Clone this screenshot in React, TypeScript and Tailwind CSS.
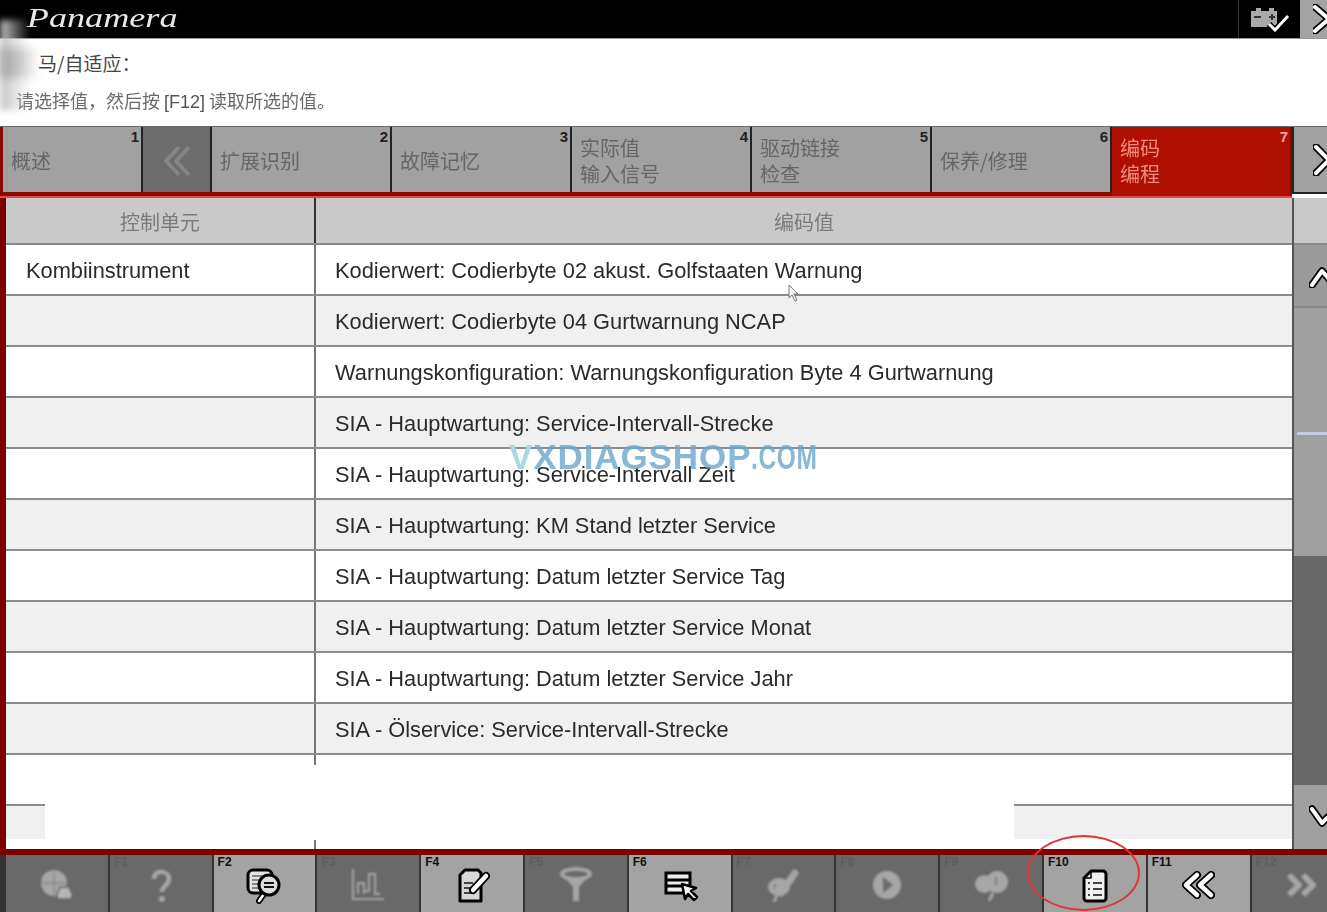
import type { ReactNode } from 'react';

const SANS = "font-['Liberation_Sans','Noto_Sans_CJK_SC',sans-serif]";
const CJK = "font-['Noto_Sans_CJK_SC','Liberation_Sans',sans-serif]";

const TABS = [
  { n: '1', lines: ['概述'], w: 'w-[140px]' },
  { n: '', lines: [], w: 'w-[69px]', back: true },
  { n: '2', lines: ['扩展识别'], w: 'w-[180px]' },
  { n: '3', lines: ['故障记忆'], w: 'w-[180px]' },
  { n: '4', lines: ['实际值', '输入信号'], w: 'w-[180px]' },
  { n: '5', lines: ['驱动链接', '检查'], w: 'w-[180px]' },
  { n: '6', lines: ['保养/修理'], w: 'w-[180px]' },
  { n: '7', lines: ['编码', '编程'], w: 'w-[178px]', active: true },
];

const ROWS = [
  'Kodierwert: Codierbyte 02 akust. Golfstaaten Warnung',
  'Kodierwert: Codierbyte 04 Gurtwarnung NCAP',
  'Warnungskonfiguration: Warnungskonfiguration Byte 4 Gurtwarnung',
  'SIA - Hauptwartung: Service-Intervall-Strecke',
  'SIA - Hauptwartung: Service-Intervall Zeit',
  'SIA - Hauptwartung: KM Stand letzter Service',
  'SIA - Hauptwartung: Datum letzter Service Tag',
  'SIA - Hauptwartung: Datum letzter Service Monat',
  'SIA - Hauptwartung: Datum letzter Service Jahr',
  'SIA - Ölservice: Service-Intervall-Strecke',
  '',
];

// white stroke with a black rim, the look of every active icon in this tool
function Rim({ d, w = 3 }: { d: string; w?: number }) {
  return (
    <>
      <path d={d} fill="none" stroke="#000" strokeWidth={w + 3.5} strokeLinecap="round" strokeLinejoin="round" />
      <path d={d} fill="none" stroke="#fff" strokeWidth={w} strokeLinecap="round" strokeLinejoin="round" />
    </>
  );
}

function Ico({ children, dim }: { children: ReactNode; dim?: boolean }) {
  return (
    <svg viewBox="0 0 40 40" className={`w-[40px] h-[40px] ${dim ? 'blur-[1px]' : 'blur-[0.3px]'}`}>
      {children}
    </svg>
  );
}

const DIM = '#a6a6a6';

const FKEYS: { label: string; on?: boolean; icon: ReactNode }[] = [
  {
    label: '',
    icon: (
      <Ico dim>
        <circle cx="17" cy="18" r="13" fill={DIM} />
        <path d="M17 6v24M5 18h24" stroke="#7d7d7d" strokeWidth="1" />
        <path d="M20 29l3-7h9l3 7v5H20z" fill="#b5b5b5" stroke="#696969" strokeWidth="1.5" />
      </Ico>
    ),
  },
  {
    label: 'F1',
    icon: (
      <Ico dim>
        <path d="M13 14c0-10 15-9 15 0 0 7-7 6-7 13" fill="none" stroke={DIM} strokeWidth="4.5" />
        <circle cx="21" cy="34" r="3" fill={DIM} />
      </Ico>
    ),
  },
  {
    label: 'F2',
    on: true,
    icon: (
      <Ico>
        <rect x="4" y="5" width="24" height="23" rx="5" fill="#e4e4e4" stroke="#000" strokeWidth="3" />
        <path d="M8 11h11M8 15h7M8 19h7M8 23h7" stroke="#666" strokeWidth="1.5" />
        <Rim d="M20 29l-5 7" w={2.5} />
        <circle cx="25" cy="20" r="10" fill="#ddd" stroke="#000" strokeWidth="3" />
        <path d="M20 18h10M20 22h10" stroke="#111" strokeWidth="2.2" />
      </Ico>
    ),
  },
  {
    label: 'F3',
    icon: (
      <Ico dim>
        <path d="M5 4v30h31M10 29V18h6v11M16 18v8h5V9h6v20h5" fill="none" stroke={DIM} strokeWidth="2" />
      </Ico>
    ),
  },
  {
    label: 'F4',
    on: true,
    icon: (
      <Ico>
        <path d="M13 5h13l3 3v28H8V10z" fill="#d8d8d8" stroke="#000" strokeWidth="3" strokeLinejoin="round" />
        <path d="M12 18h9M12 23h8M12 28h11" stroke="#444" strokeWidth="2" />
        <Rim d="M21 25L34 11" w={4.5} />
      </Ico>
    ),
  },
  {
    label: 'F5',
    icon: (
      <Ico dim>
        <ellipse cx="20" cy="9" rx="14" ry="5" fill="none" stroke={DIM} strokeWidth="4" />
        <path d="M8 12l9 10v14h6V22l9-10z" fill={DIM} />
      </Ico>
    ),
  },
  {
    label: 'F6',
    on: true,
    icon: (
      <Ico>
        <rect x="6" y="8" width="24" height="20" fill="#eee" stroke="#000" strokeWidth="3" />
        <path d="M6 15h24M6 21h24" stroke="#000" strokeWidth="3" />
        <path d="M22 19l3 15 3-5 6 6 3-3-6-6 5-3z" fill="#fff" stroke="#000" strokeWidth="2.5" strokeLinejoin="round" />
      </Ico>
    ),
  },
  {
    label: 'F7',
    icon: (
      <Ico dim>
        <ellipse cx="16" cy="22" rx="11" ry="9" fill={DIM} />
        <path d="M18 28L32 8" stroke={DIM} strokeWidth="7" strokeLinecap="round" />
        <path d="M14 30l-3 7" stroke={DIM} strokeWidth="3" />
        <circle cx="12" cy="21" r="1.5" fill="#777" />
      </Ico>
    ),
  },
  {
    label: 'F8',
    icon: (
      <Ico dim>
        <circle cx="20" cy="20" r="14" fill={DIM} />
        <path d="M16 12l10 8-10 8z" fill="#6d6d6d" />
      </Ico>
    ),
  },
  {
    label: 'F9',
    icon: (
      <Ico dim>
        <ellipse cx="13" cy="19" rx="9" ry="9" fill={DIM} />
        <circle cx="26" cy="17" r="11" fill={DIM} />
        <path d="M22 28l-4 8" stroke={DIM} strokeWidth="3" />
        <path d="M25 12v8" stroke="#7d7d7d" strokeWidth="2" />
      </Ico>
    ),
  },
  {
    label: 'F10',
    on: true,
    icon: (
      <Ico>
        <path d="M16 6h12a3 3 0 0 1 3 3v24a3 3 0 0 1-3 3H12a3 3 0 0 1-3-3V13z" fill="#f0f0f0" stroke="#000" strokeWidth="3" strokeLinejoin="round" />
        <path d="M16 6v7H9" fill="none" stroke="#000" strokeWidth="1.5" />
        <path d="M13 18h2M18 18h9M13 24h2M18 24h9M13 30h2M18 30h9" stroke="#444" strokeWidth="2" />
      </Ico>
    ),
  },
  {
    label: 'F11',
    on: true,
    icon: (
      <Ico>
        <Rim d="M18 10L7 20l11 10" w={4.5} />
        <Rim d="M32 10L21 20l11 10" w={4.5} />
      </Ico>
    ),
  },
  {
    label: 'F12',
    icon: (
      <Ico dim>
        <path d="M7 10l10 10-10 10M21 10l10 10-10 10" fill="none" stroke={DIM} strokeWidth="6" strokeLinejoin="round" />
      </Ico>
    ),
  },
];

function Row({ left, text, odd, h }: { left?: string; text?: string; odd: boolean; h: string }) {
  return (
    <div className={`flex ${h} border-b-2 border-[#8c8c8c] ${odd ? 'bg-white' : 'bg-[#f0f0f0]'}`}>
      <div className="w-[308px] shrink-0 pl-[20px] pt-[4px] flex items-center text-[21.8px] text-[#2a2a2a] blur-[0.3px]">{left}</div>
      <div className="w-[2px] shrink-0 bg-[#777]" />
      <div className="flex-1 pl-[19px] pt-[4px] flex items-center text-[21.8px] text-[#2a2a2a] blur-[0.3px] whitespace-nowrap">{text}</div>
    </div>
  );
}

export default function App() {
  return (
    <div className={`relative w-[1327px] h-[912px] overflow-hidden bg-white ${SANS}`}>
      {/* top bar */}
      <div className="flex h-[39px] bg-black border-b border-[#999]">
        <div className="pl-[20px] font-['Liberation_Serif',serif] italic text-[27px] leading-[36px] text-[#e8e8e8] scale-x-[1.34] origin-left">
          Panamera
        </div>
        <div className="flex-1" />
        <div className="w-[62px] border-l border-[#333] flex items-center justify-center">
          <svg viewBox="0 0 40 26" className="w-[40px] h-[26px] blur-[0.3px]">
            <path d="M1 5h5V2h5v3h8V2h5v3h3v16H1z" fill="#a9a9a9" />
            <path d="M4 11h7" stroke="#333" strokeWidth="2" />
            <path d="M19 11h6M22 8v6" stroke="#333" strokeWidth="2" />
            <path d="M19 18l6 6 13-14" fill="none" stroke="#000" strokeWidth="6" />
            <path d="M19 18l6 6 13-14" fill="none" stroke="#fff" strokeWidth="3" />
          </svg>
        </div>
        <div className="w-[27px] bg-[#a3a3a3] flex items-center justify-end overflow-hidden">
          <svg viewBox="0 0 14 30" className="w-[14px] h-[30px]">
            <Rim d="M2 3l14 12M2 27l14-12" w={4} />
          </svg>
        </div>
      </div>

      {/* message area */}
      <div className={`h-[87px] pt-[12px] ${CJK}`}>
        <div className="pl-[38px] text-[19px] leading-[24px] text-[#444]">马/自适应：</div>
        <div className="pl-[16px] mt-[13px] text-[18px] leading-[24px] text-[#6a6a6a] blur-[0.3px]">
          请选择值，然后按 <span className={`${SANS} text-[#555]`}>[F12]</span> 读取所选的值。
        </div>
      </div>

      {/* tabs */}
      <div className="flex h-[72px] border-t border-[#666]">
        <div className="flex flex-1 pl-[3px] bg-[#8b0a00] h-[71px] items-start border-b-[2px] border-[#e04a40]">
          {TABS.map((t, i) => (
            <div
              key={i}
              className={`relative ${t.w} shrink-0 ${t.active ? 'h-[69px] bg-[#ae0f00] pb-[4px]' : 'h-[65px] border-r-[2px] border-[#222]'} ${t.back ? 'bg-[#6d6d6d]' : t.active ? '' : 'bg-[#a1a1a1]'} flex flex-col justify-center pl-[8px] pt-[2px] ${CJK}`}
            >
              {t.n && (
                <span className={`absolute top-[1px] right-[2px] ${SANS} text-[15px] font-bold leading-[17px] ${t.active ? 'text-[#f0a8a0]' : 'text-[#222]'}`}>
                  {t.n}
                </span>
              )}
              {t.back && (
                <svg viewBox="0 0 40 40" className="w-[40px] h-[40px] ml-[5px] blur-[0.4px]">
                  <path d="M23 6L10 20l13 14M33 6L20 20l13 14" fill="none" stroke="#858585" strokeWidth="4" strokeLinejoin="round" />
                </svg>
              )}
              {t.lines.map(l => (
                <div key={l} className={`text-[20px] leading-[26px] blur-[0.3px] whitespace-nowrap ${t.active ? 'text-[#f08d80]' : 'text-[#666]'}`}>
                  {l}
                </div>
              ))}
            </div>
          ))}
        </div>
        <div className="w-[35px] shrink-0 h-[67px] bg-[#a1a1a1] border-l-[2px] border-[#222] border-b-[2px] flex items-center justify-end overflow-hidden">
          <svg viewBox="0 0 14 32" className="w-[14px] h-[32px]">
            <Rim d="M3 3l13 13L3 29" w={4} />
          </svg>
        </div>
      </div>

      {/* table + scrollbar */}
      <div className="flex h-[651px]">
        <div className="w-[6px] shrink-0 bg-[#7d0000]" />
        <div className="w-[1286px] shrink-0 flex flex-col">
          <div className={`flex h-[47px] bg-[#c9c9c9] border-b-2 border-[#888] text-[20px] text-[#7b7b7b] ${CJK}`}>
            <div className="w-[308px] shrink-0 pt-[2px] flex items-center justify-center blur-[0.3px]">控制单元</div>
            <div className="w-[2px] shrink-0 bg-[#333]" />
            <div className="flex-1 pt-[2px] flex items-center justify-center blur-[0.3px]">编码值</div>
          </div>
          {ROWS.map((r, i) => (
            <Row key={i} left={i === 0 ? 'Kombiinstrument' : ''} text={r} odd={i % 2 === 0} h="h-[51px]" />
          ))}
          <div className="flex h-[33px] bg-[#f0f0f0]">
            <div className="w-[308px] shrink-0" />
            <div className="w-[2px] shrink-0 bg-[#777]" />
          </div>
          <div className="flex flex-1 bg-white">
            <div className="w-[308px] shrink-0" />
            <div className="w-[2px] shrink-0 bg-[#777]" />
          </div>
        </div>
        <div className="flex-1 flex flex-col border-l-2 border-[#555]">
          <div className="h-[47px] bg-[#c9c9c9] border-b-2 border-[#888]" />
          <div className="h-[63px] bg-[#9b9b9b] border-b-2 border-[#8a8a8a] flex items-center justify-end overflow-hidden">
            <svg viewBox="0 0 18 24" className="w-[18px] h-[24px]">
              <Rim d="M3 21L13 7l8 9" w={4} />
            </svg>
          </div>
          <div className="relative h-[248px] bg-[#a0a0a0]">
            <div className="absolute left-[3px] right-0 top-[124px] h-[3px] bg-[#c4cbe0] blur-[0.5px]" />
          </div>
          <div className="h-[229px] bg-[#686868]" />
          <div className="flex-1 bg-[#a0a0a0] flex items-center justify-end overflow-hidden">
            <svg viewBox="0 0 18 24" className="w-[18px] h-[24px]">
              <Rim d="M3 4l10 14 8-8" w={4} />
            </svg>
          </div>
        </div>
      </div>

      {/* lower red edge */}
      <div className="h-[6px] bg-[#7d0000]" />

      {/* function keys */}
      <div className="flex h-[57px] pl-[4px] bg-[#333]">
        {FKEYS.map(k => (
          <div
            key={k.label || 'x'}
            className={`relative w-[103.8px] shrink-0 border-l-[2px] border-[#333] flex items-center justify-center pt-[3px] ${k.on ? 'bg-[#a3a3a3]' : 'bg-[#696969]'}`}
          >
            <span className={`absolute left-[4px] top-0 text-[12px] font-bold leading-[14px] ${k.on ? 'text-[#111]' : 'text-[#5e5e5e]'}`}>{k.label}</span>
            {k.icon}
          </div>
        ))}
      </div>

      {/* things lying over the page: smudge, blanked strip, watermark, cursor, red circle */}
      <div className="absolute left-0 top-[20px] w-[30px] h-[90px] bg-gradient-to-r from-[#c4c4c4] to-transparent blur-[3px]" />
      <div className="absolute left-0 top-[48px] w-[40px] h-[30px] bg-gradient-to-r from-[#a8a8a8] to-transparent blur-[4px]" />
      <div className="absolute left-[45px] top-[765px] w-[969px] h-[75px] bg-white" />
      <div className="absolute left-[509px] top-[437px] text-[35px] font-bold leading-[40px] whitespace-nowrap text-[#6aa6cc]/80 tracking-[0.9px] blur-[0.4px]">
        <span className="text-[#a8d8e4]">V</span>XDIAGSHOP<span className="inline-block scale-x-[0.7] origin-left">.COM</span>
      </div>
      <svg viewBox="0 0 12 18" className="absolute left-[788px] top-[284px] w-[12px] h-[18px]">
        <path d="M1 1v13l3-3 3 6 2-1-3-6h4z" fill="#f4f4f4" stroke="#777" strokeWidth="1" />
      </svg>
      <div className="absolute left-[1027px] top-[835px] w-[113px] h-[76px] rounded-[50%] border-2 border-[#e0343c] blur-[0.3px]" />
    </div>
  );
}
